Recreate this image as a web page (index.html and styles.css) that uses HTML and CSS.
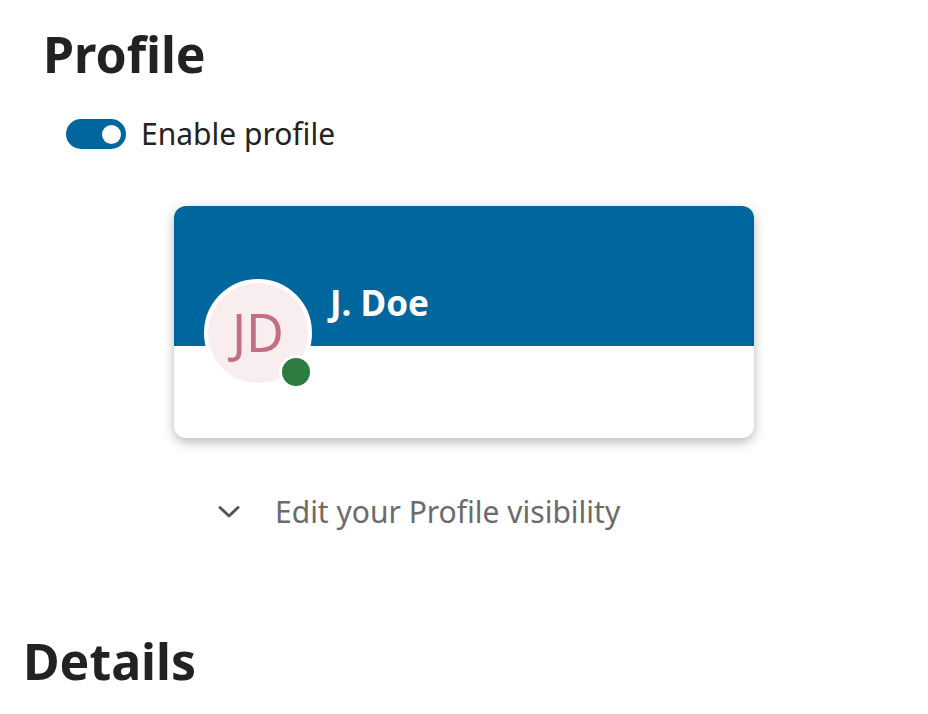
FILE: index.html
```html
<!DOCTYPE html>
<html>
<head>
<meta charset="utf-8">
<link rel="stylesheet" href="styles.css">
</head>
<body>
<div class="page">
  <section class="profile">
    <h1 class="title">Profile</h1>
    <div class="toggle-row">
      <span class="toggle"><span class="knob"></span></span>
      <span class="toggle-label">Enable profile</span>
    </div>
    <div class="card">
      <div class="card-header">
        <div class="avatar">
          <span class="initials">JD</span>
          <span class="status"></span>
        </div>
        <div class="name">J. Doe</div>
      </div>
      <div class="card-body"></div>
    </div>
    <div class="expander">
      <svg class="chevron" width="22" height="14" viewBox="0 0 22 14"><path d="M2 2.5 L11 11 L20 2.5" fill="none" stroke="#555" stroke-width="3" stroke-linecap="round" stroke-linejoin="round"/></svg>
      <span class="expander-text">Edit your Profile visibility</span>
    </div>
  </section>
  <h1 class="title details">Details</h1>
</div>
</body>
</html>
```
FILE: styles.css
```css
html, body {
  margin: 0;
  padding: 0;
  background: #fff;
}
body {
  font-family: "Noto Sans", "Open Sans", sans-serif;
  color: #222;
}
.page {
  padding-left: 23px;
}
.profile {
  padding-left: 20px;
}
.title {
  margin: 0;
  font-size: 50px;
  line-height: 60px;
  font-weight: 700;
  color: #222;
}
.profile .title {
  padding-top: 24px;
}
.toggle-row {
  display: flex;
  align-items: center;
  gap: 15px;
  margin-top: 30px;
  margin-left: 23px;
  height: 40px;
}
.toggle {
  width: 60px;
  height: 30px;
  border-radius: 15px;
  background: #00679e;
  display: flex;
  align-items: center;
  justify-content: flex-end;
  padding-right: 5px;
  box-sizing: border-box;
}
.knob {
  width: 19px;
  height: 19px;
  border-radius: 50%;
  background: #fff;
}
.toggle-label {
  font-size: 30px;
  line-height: 40px;
  color: #222;
}
.card {
  margin-top: 52px;
  margin-left: 131px;
  width: 580px;
  border-radius: 12px;
  background: #fff;
  box-shadow: 0 4px 12px rgba(0, 0, 0, 0.28);
}
.card-header {
  height: 140px;
  box-sizing: border-box;
  background: #00679e;
  border-radius: 12px 12px 0 0;
  display: flex;
  align-items: flex-start;
  padding-top: 73px;
  padding-left: 30px;
  gap: 18px;
}
.avatar {
  position: relative;
  width: 108px;
  height: 108px;
  box-sizing: border-box;
  border: 4px solid #fff;
  border-radius: 50%;
  background: #f8eef0;
  display: flex;
  align-items: center;
  justify-content: center;
  flex-shrink: 0;
}
.initials {
  font-size: 52px;
  line-height: 1;
  font-weight: 400;
  color: #c26f83;
  padding-bottom: 3px;
}
.status {
  position: absolute;
  left: 71px;
  top: 72px;
  width: 28px;
  height: 28px;
  border-radius: 50%;
  background: #2e7d40;
  border: 3px solid #fff;
}
.name {
  font-size: 35px;
  line-height: 46px;
  font-weight: 700;
  color: #fff;
  margin-top: 1px;
}
.card-body {
  height: 92px;
}
.expander {
  display: flex;
  align-items: center;
  gap: 35px;
  margin-top: 54px;
  margin-left: 175px;
  height: 40px;
}
.chevron {
  display: block;
}
.expander-text {
  font-size: 30px;
  line-height: 40px;
  color: #6b6b6b;
}
.details {
  margin-top: 99px;
}
```
